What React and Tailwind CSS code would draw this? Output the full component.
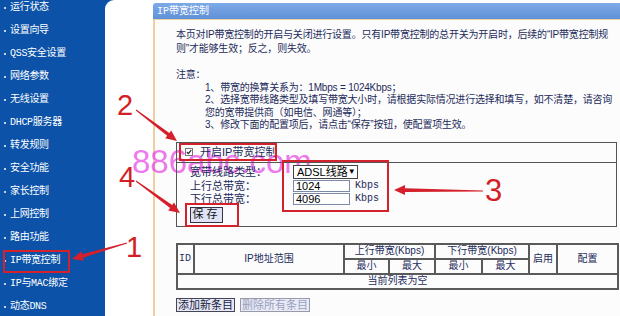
import React from 'react';

const menu = [
  '运行状态', '设置向导', 'QSS安全设置', '网络参数', '无线设置', 'DHCP服务器', '转发规则',
  '安全功能', '家长控制', '上网控制', '路由功能', 'IP带宽控制', 'IP与MAC绑定', '动态DNS',
];

// tapered red annotation arrow, tail -> tip
function Arrow({ x1, y1, x2, y2 }) {
  const dx = x2 - x1, dy = y2 - y1;
  const len = Math.hypot(dx, dy);
  const ux = dx / len, uy = dy / len;
  const nx = -uy, ny = ux;
  const head = 11, hw = 5, tail = 0.5, neck = 1.8;
  const bx = x2 - ux * head, by = y2 - uy * head;
  const pts = [
    [x1 + nx * tail, y1 + ny * tail],
    [bx + nx * neck, by + ny * neck],
    [bx + nx * hw, by + ny * hw],
    [x2, y2],
    [bx - nx * hw, by - ny * hw],
    [bx - nx * neck, by - ny * neck],
    [x1 - nx * tail, y1 - ny * tail],
  ];
  return <polygon points={pts.map((p) => p.join(',')).join(' ')} fill="#d5202b" />;
}

const App = () => {
  return (
    <div className="relative w-[620px] h-[316px] overflow-hidden flex bg-[#0b52a8] text-[10px] font-['Liberation_Mono','Noto_Sans_CJK_SC',monospace]">
      {/* Sidebar */}
      <aside className="w-[105px] shrink-0 flex flex-col mt-[-4px] text-white">
        {menu.map((m) => (
          <div key={m} className="h-[23px] shrink-0 flex items-center pl-[4px] gap-[4px] whitespace-nowrap tracking-[-0.3px]">
            <span className="w-[2px] h-[2px] bg-white rounded-full"></span>
            <span>{m}</span>
          </div>
        ))}
      </aside>

      {/* Main */}
      <main className="flex-1 bg-white rounded-tl-[9px] pl-[48px] pt-[3px] flex flex-col">
        <div className="h-[16px] bg-gradient-to-b from-[#7eaae6] to-[#5f90d8] rounded-tl-[3px] text-white pl-[4px] flex items-center whitespace-nowrap">
          IP带宽控制
        </div>
        <div className="flex-1 bg-[#fcfcfc] border-l-2 border-t border-[#f0cf9f] pl-[21px] pr-[3px] pt-[8px] text-[#1d2b5b] whitespace-nowrap font-['Liberation_Sans','Noto_Sans_CJK_SC',sans-serif] tracking-[-0.2px]">
          <div className="leading-[14px]">
            <div>本页对IP带宽控制的开启与关闭进行设置。只有IP带宽控制的总开关为开启时，后续的“IP带宽控制规</div>
            <div>则”才能够生效；反之，则失效。</div>
          </div>
          <div className="mt-[13px] leading-[12.5px]">
            <div>注意：</div>
            <div className="pl-[29px]">1、带宽的换算关系为：1Mbps = 1024Kbps；</div>
            <div className="pl-[29px]">2、选择宽带线路类型及填写带宽大小时，请根据实际情况进行选择和填写，如不清楚，请咨询</div>
            <div className="pl-[29px]">您的宽带提供商（如电信、网通等）；</div>
            <div className="pl-[29px]">3、修改下面的配置项后，请点击“保存”按钮，使配置项生效。</div>
          </div>

          {/* Settings box */}
          <div className="relative z-10 mt-[10px] w-[441px] border border-[#555] tracking-normal">
            <div className="h-[20px] border-b border-[#555] flex items-center pl-[8px] gap-[7px]">
              <span className="w-[8px] h-[8px] border border-[#777] bg-white flex items-center justify-center">
                <svg width="6" height="6" viewBox="0 0 6 6">
                  <path d="M0.8 3 L2.4 4.6 L5.2 1.2" stroke="#222" strokeWidth="1.2" fill="none" />
                </svg>
              </span>
              <span className="text-[11px]">开启IP带宽控制</span>
            </div>
            <div className="pl-[13px] pt-[2px] pb-[3px] text-[11px] leading-none">
              <div className="flex items-center h-[15px]">
                <span className="w-[103px]">宽带线路类型：</span>
                <div className="w-[65px] h-[14px] border border-[#444] bg-white flex items-center justify-between pl-[3px] pr-[4px] text-black">
                  <span>ADSL线路</span>
                  <span className="text-[8px]">▼</span>
                </div>
              </div>
              <div className="flex items-center h-[13px]">
                <span className="w-[103px]">上行总带宽：</span>
                <div className="w-[57px] h-[12px] border border-[#7a8aa8] bg-white pl-[2px] flex items-center text-black">1024</div>
                <span className="ml-[5px] text-[10px] font-['Liberation_Mono',monospace]">Kbps</span>
              </div>
              <div className="flex items-center h-[13px]">
                <span className="w-[103px]">下行总带宽：</span>
                <div className="w-[57px] h-[12px] border border-[#7a8aa8] bg-white pl-[2px] flex items-center text-black">4096</div>
                <span className="ml-[5px] text-[10px] font-['Liberation_Mono',monospace]">Kbps</span>
              </div>
              <button className="mt-[1px] w-[33px] h-[16px] bg-[#dfe3f5] border border-[#334] text-[11px] tracking-[3px] text-[#111] flex items-center justify-center">
                保存
              </button>
            </div>
          </div>

          {/* Rule table */}
          <table className="mt-[16px] w-[441px] table-fixed border-collapse border-2 border-[#5a5a5a] text-center leading-none tracking-normal">
            <colgroup>
              <col className="w-[17px]" />
              <col className="w-[150px]" />
              <col className="w-[45px]" />
              <col className="w-[46px]" />
              <col className="w-[47px]" />
              <col className="w-[47px]" />
              <col className="w-[28px]" />
              <col className="w-[61px]" />
            </colgroup>
            <tbody>
              <tr className="h-[15px]">
                <td rowSpan={2} className="border-2 border-[#5a5a5a] text-left pl-[1px] font-['Liberation_Mono',monospace]">ID</td>
                <td rowSpan={2} className="border-2 border-[#5a5a5a]">IP地址范围</td>
                <td colSpan={2} className="border-2 border-[#5a5a5a]">上行带宽(Kbps)</td>
                <td colSpan={2} className="border-2 border-[#5a5a5a]">下行带宽(Kbps)</td>
                <td rowSpan={2} className="border-2 border-[#5a5a5a]">启用</td>
                <td rowSpan={2} className="border-2 border-[#5a5a5a]">配置</td>
              </tr>
              <tr className="h-[15px]">
                <td className="border-2 border-[#5a5a5a]">最小</td>
                <td className="border-2 border-[#5a5a5a]">最大</td>
                <td className="border-2 border-[#5a5a5a]">最小</td>
                <td className="border-2 border-[#5a5a5a]">最大</td>
              </tr>
              <tr className="h-[15px]">
                <td colSpan={8} className="border-2 border-[#5a5a5a]">当前列表为空</td>
              </tr>
            </tbody>
          </table>

          <div className="mt-[8px] flex gap-[5px] text-[11px] font-['Noto_Sans_CJK_SC',sans-serif] leading-none tracking-normal">
            <button className="w-[59px] h-[14px] bg-[#e4e8f6] border border-[#445] text-[#1a1a3a] flex items-center justify-center">添加新条目</button>
            <button className="w-[70px] h-[14px] bg-[#e8ebf6] border border-[#99a] text-[#9aa0c0] flex items-center justify-center">删除所有条目</button>
          </div>
        </div>
      </main>

      {/* Watermark */}
      <div className="absolute left-[132px] top-[145px] text-[33px] leading-none font-['Liberation_Sans',sans-serif] text-[#e63de6]/70 pointer-events-none">
        886abc.com
      </div>

      {/* Annotation boxes */}
      <div className="absolute z-20 left-[3px] top-[250px] w-[67px] h-[23px] border-2 border-[#d3222b]"></div>
      <div className="absolute z-20 left-[179px] top-[143px] w-[98px] h-[18px] border-2 border-[#d3222b]"></div>
      <div className="absolute z-20 left-[282px] top-[160px] w-[107px] h-[52px] border-2 border-[#d3222b]"></div>
      <div className="absolute z-20 left-[185px] top-[203px] w-[54px] h-[24px] border-2 border-[#d3222b]"></div>

      {/* Annotation arrows */}
      <svg className="absolute z-20 left-0 top-0 pointer-events-none" width="620" height="316">
        <Arrow x1={136} y1={110} x2={177} y2={141} />
        <Arrow x1={136} y1={181} x2={180} y2={213} />
        <Arrow x1={127} y1={243} x2={72} y2={259} />
        <Arrow x1={483} y1={191} x2={394} y2={190} />
      </svg>

      {/* Annotation numbers */}
      <div className="absolute left-[117px] top-[91px] text-[29px] leading-none text-[#d21f26] font-['Liberation_Sans',sans-serif]">2</div>
      <div className="absolute left-[119px] top-[163px] text-[29px] leading-none text-[#d21f26] font-['Liberation_Sans',sans-serif]">4</div>
      <div className="absolute left-[126px] top-[233px] text-[29px] leading-none text-[#d21f26] font-['Liberation_Sans',sans-serif]">1</div>
      <div className="absolute left-[485px] top-[175px] text-[31px] leading-none text-[#d21f26] font-['Liberation_Sans',sans-serif]">3</div>
    </div>
  );
};

export default App;
